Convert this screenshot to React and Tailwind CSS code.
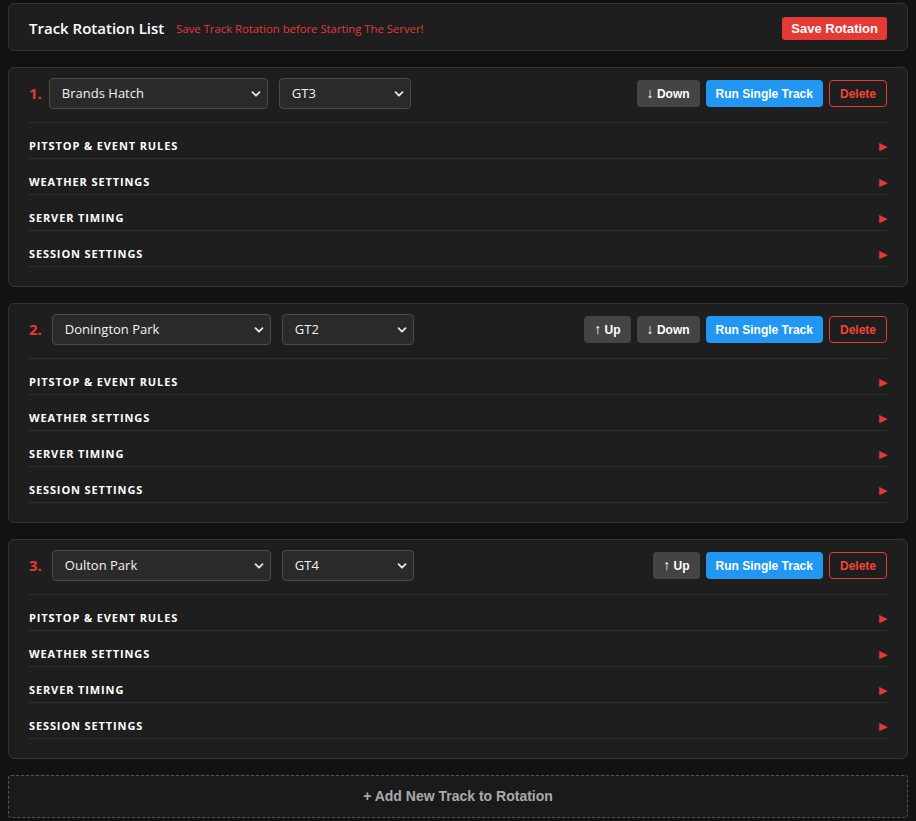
import React, { useState } from 'react';

const TRACKS = ['Brands Hatch', 'Donington Park', 'Oulton Park', 'Silverstone', 'Snetterton'];
const CLASSES = ['GT3', 'GT2', 'GT4', 'TCX'];
const SECTIONS = ['Pitstop & Event Rules', 'Weather Settings', 'Server Timing', 'Session Settings'];

const Chevron = () => (
    <svg className="pointer-events-none absolute right-[7px] top-1/2 -translate-y-1/2" width="10" height="10" viewBox="0 0 10 10">
        <path d="M1.5 3.2 L5 6.7 L8.5 3.2" fill="none" stroke="#e8e8e8" strokeWidth="1.8" strokeLinecap="round" strokeLinejoin="round" />
    </svg>
);

const Select = ({ value, options, width, onChange }) => (
    <div className={`relative ${width}`}>
        <select
            value={value}
            onChange={(e) => onChange(e.target.value)}
            className="w-full h-[31px] appearance-none bg-[#2a2a2a] border border-[#4a4a4a] rounded-[4px] pl-[12px] pr-6 text-[13px] text-[#f2f2f2] outline-none cursor-pointer font-['Open_Sans',sans-serif]"
        >
            {options.map((o) => <option key={o} value={o}>{o}</option>)}
        </select>
        <Chevron />
    </div>
);

const baseBtn = "h-[27px] rounded-[4px] text-[12px] font-bold font-['Liberation_Sans',Arial,sans-serif]";

const TrackCard = ({ index, item, total, onChange, onMove, onDelete }) => {
    const [open, setOpen] = useState(null);

    return (
        <div className="bg-[#1e1e1e] border border-[#333] rounded-[6px] px-5 pt-[10px] pb-[19px]">
            <div className="flex items-center pb-[13px] border-b border-[#2e2e2e]">
                <span className={`text-[#e53935] font-bold text-[15px] font-['Open_Sans',sans-serif] ${index === 0 ? 'mr-[7px]' : 'mr-[10px]'}`}>{index + 1}.</span>
                <Select value={item.track} options={TRACKS} width="w-[219px]" onChange={(v) => onChange({ ...item, track: v })} />
                <div className="ml-[11px]">
                    <Select value={item.car} options={CLASSES} width="w-[132px]" onChange={(v) => onChange({ ...item, car: v })} />
                </div>
                <div className="ml-auto flex items-center gap-[6px]">
                    {index > 0 && (
                        <button onClick={() => onMove(-1)} className={`${baseBtn} px-[10px] bg-[#444] text-white`}>
                            <span className="text-[14px]">↑</span> Up
                        </button>
                    )}
                    {index < total - 1 && (
                        <button onClick={() => onMove(1)} className={`${baseBtn} px-[10px] bg-[#444] text-white`}>
                            <span className="text-[14px]">↓</span> Down
                        </button>
                    )}
                    <button className={`${baseBtn} px-[10px] bg-[#2196f3] text-white`}>Run Single Track</button>
                    <button onClick={onDelete} className={`${baseBtn} px-[10px] bg-transparent border border-[#e53935] text-[#f44336]`}>Delete</button>
                </div>
            </div>
            {SECTIONS.map((s, i) => (
                <div
                    key={s}
                    onClick={() => setOpen(open === i ? null : i)}
                    className="flex items-center justify-between h-[36px] pt-[12px] border-b border-[#2e2e2e] cursor-pointer"
                >
                    <span className="uppercase text-[11px] font-bold tracking-[0.08em] text-white font-['Open_Sans',sans-serif]">{s}</span>
                    <span className="text-[#e53935] text-[11px] leading-none -mt-[3px]">{open === i ? '▼' : '▶'}</span>
                </div>
            ))}
        </div>
    );
};

const App = () => {
    const [items, setItems] = useState([
        { id: 1, track: 'Brands Hatch', car: 'GT3' },
        { id: 2, track: 'Donington Park', car: 'GT2' },
        { id: 3, track: 'Oulton Park', car: 'GT4' },
    ]);

    const move = (i, d) => {
        const next = [...items];
        const [x] = next.splice(i, 1);
        next.splice(i + d, 0, x);
        setItems(next);
    };

    return (
        <div className="min-h-screen bg-[#121212] pl-2 pr-2 pt-[3px] pb-2 font-['Open_Sans',sans-serif]">
            <div className="flex flex-col gap-4">
                <div className="h-[48px] bg-[#1e1e1e] border border-[#333] rounded-[6px] flex items-center px-5 pt-[3px]">
                    <h2 className="text-white font-semibold text-[15px]">Track Rotation List</h2>
                    <span className="ml-[12px] mt-[2px] text-[11.3px] text-[#e53935]">Save Track Rotation before Starting The Server!</span>
                    <button className="ml-auto h-[23px] px-[9px] rounded-[3px] bg-[#e53935] text-white text-[13px] font-bold font-['Liberation_Sans',Arial,sans-serif]">Save Rotation</button>
                </div>

                {items.map((item, i) => (
                    <TrackCard
                        key={item.id}
                        index={i}
                        item={item}
                        total={items.length}
                        onChange={(v) => setItems(items.map((o, j) => (j === i ? v : o)))}
                        onMove={(d) => move(i, d)}
                        onDelete={() => setItems(items.filter((_, j) => j !== i))}
                    />
                ))}

                <button
                    onClick={() => setItems([...items, { id: Date.now(), track: 'Silverstone', car: 'GT3' }])}
                    className="h-[43px] w-full bg-[#1a1a1a] border border-dashed border-[#555] rounded-[3px] text-[#aaa] text-[14px] font-bold font-['Liberation_Sans',Arial,sans-serif]"
                >
                    + Add New Track to Rotation
                </button>
            </div>
        </div>
    );
};

export default App;
